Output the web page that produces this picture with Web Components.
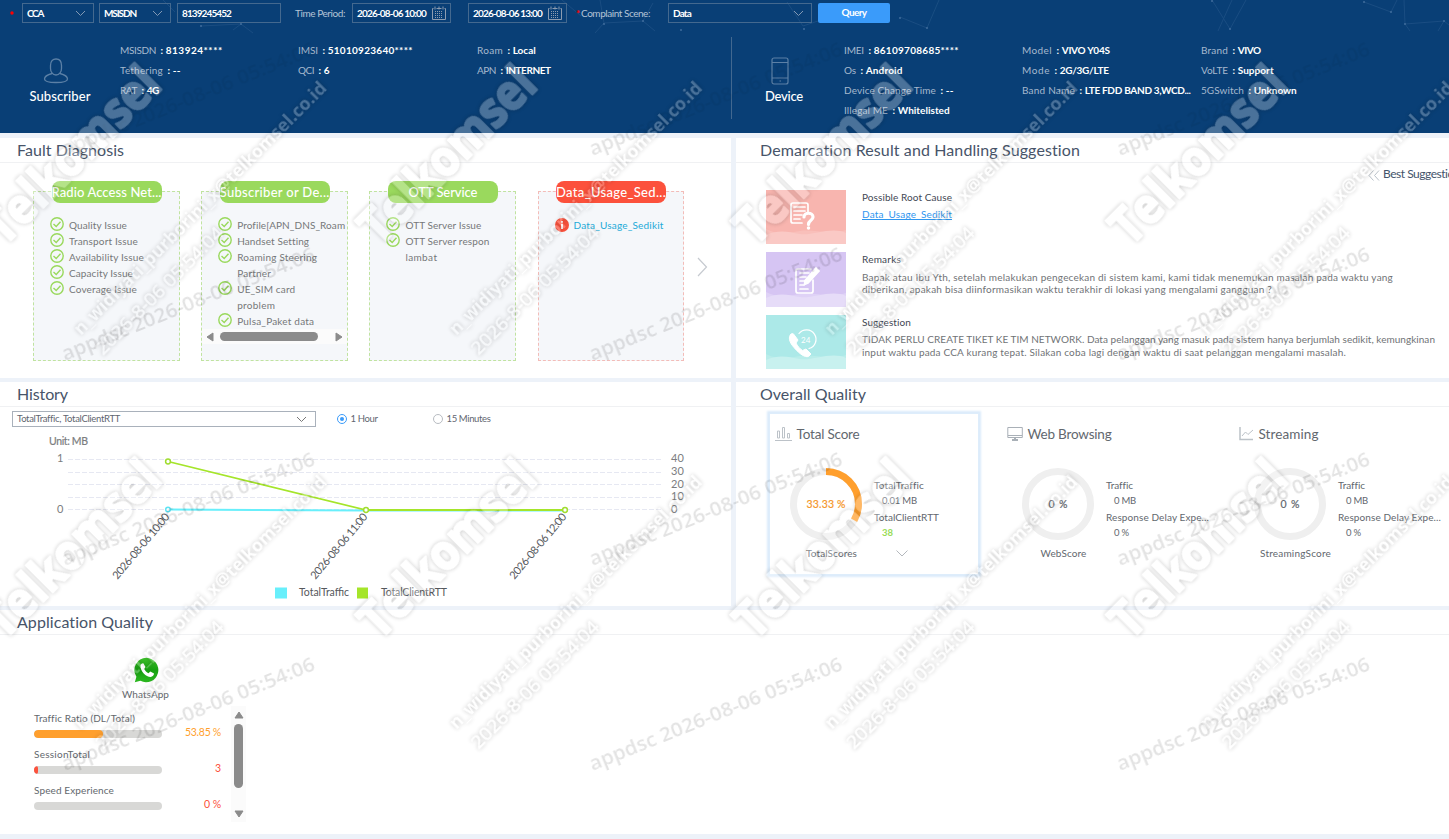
<!DOCTYPE html>
<html lang="en">
<head>
<meta charset="utf-8">
<title>Complaint Diagnosis</title>
<style>
html,body{margin:0;width:1449px;height:839px;overflow:hidden;background:#edf2f9;font-family:Lato,"Open Sans",sans-serif}
</style>
</head>
<body>
<complaint-app></complaint-app>
<script>
const define = (name, css, html, after) => customElements.define(name, class extends HTMLElement {
  constructor() { super(); this.attachShadow({mode: 'open'}); }
  connectedCallback() {
    if (this.ready) return;
    this.ready = true;
    const a = k => this.getAttribute(k) || '';
    this.shadowRoot.innerHTML = '<style>*{box-sizing:border-box}' + css + '</style>' + (typeof html === 'function' ? html(a, this) : html);
    if (after) after(this, a);
  }
});
const txt = (s, w, size = 10, extra = '') => `<fit-text w="${w}" s="${size}" ${extra}>${s}</fit-text>`;

/* ---------- query bar ---------- */
define('query-box', `:host{display:flex;align-items:center;height:20px;border:1px solid #44698f;color:#fff;padding:0 7px 0 4px;justify-content:space-between;flex:none;box-sizing:border-box}`,
  a => `<slot></slot>` + (a('kind') === 'select'
    ? `<svg width="11" height="7" viewBox="0 0 11 7" fill="none" stroke="#8299b4"><path d="M1 1l4.5 4.5L10 1"/></svg>`
    : a('kind') === 'date'
    ? `<svg width="14" height="14" viewBox="0 0 14 14" fill="none" stroke="#8c9cb0" style="margin-right:-3px"><path d="M.5 2.5v11h13v-11M.5 2.5h1M4.500 2.500h5M12.500 2.500h1M3 .5v3M11 .5v3M7 .5v3"/><path stroke-dasharray="1 1" d="M3 5.500h8M3 7.500h8M3 9.500h8M3 11.500h8"/></svg>` : ''));

define('query-bar', `:host{display:flex;align-items:center;height:26px;padding:0 0 0 10px}
 .star{color:#f00;font:700 10px/10px Lato;width:4px}
 .lab{color:#b4c4d6;display:flex}button{display:flex;align-items:center;justify-content:center;font:700 10px Lato;color:#fff;background:#3a9bfa;border:0;border-radius:2px;width:72px;height:20px;margin-left:6px;padding:0 0 1px}`,
 `<svg width="4" height="4" style="margin-right:8px"><circle cx="2" cy="2" r="1.700" fill="#f00"/></svg>
 <query-box kind="select" style="width:72px">${txt('CCA',16,10,'b')}</query-box>
 <query-box kind="select" style="width:72px;margin-left:5px">${txt('MSISDN',32,10,'b')}</query-box>
 <query-box style="width:104px;margin-left:6px">${txt('8139245452',49,10,'b')}</query-box>
 <span class="lab" style="margin-left:14px">${txt('Time Period:',50)}</span>
 <query-box kind="date" style="width:99px;margin-left:7px">${txt('2026-08-06 10:00',69,10,'b')}</query-box>
 <query-box kind="date" style="width:99px;margin-left:17px">${txt('2026-08-06 13:00',69,10,'b')}</query-box>
 <span class="star" style="margin-left:9px">*</span><span class="lab" style="margin-left:1px">${txt('Complaint Scene:',69)}</span>
 <query-box kind="select" style="width:144px;margin-left:18px">${txt('Data',18,10,'b')}</query-box>
 <button>${txt('Query',25,10,'b')}</button>`);

/* ---------- identity blocks ---------- */
define('info-item', `:host{display:flex;height:20px;align-items:center;color:#fff}.k{color:#a6b9ce;display:flex}i{font:700 10px/13px Lato;width:5px;margin-left:4px;text-align:left;padding-left:.5px;margin-right:.7px}`,
 a => `<span class="k">${txt(a('k'), a('kw'))}</span><i>:</i>${txt(a('v'), a('vw'), 10, 'b')}`);

define('info-block', `:host{display:flex;box-sizing:border-box;height:82px}
 .who{display:flex;flex-direction:column;align-items:center;justify-content:flex-end;color:#fff;height:68px;gap:4px}
 .cols{display:grid;grid-template-columns:178px 179px 150px;padding-top:3px}`,
 `<div class="who"><slot name="icon"></slot><slot name="name"></slot></div><div class="cols"><div><slot name="c1"></slot></div><div><slot name="c2"></slot></div><div><slot name="c3"></slot></div></div>`,
 (el, a) => { el.shadowRoot.querySelector('.who').style.width = a('who') + 'px'; el.shadowRoot.querySelector('.cols').style.marginLeft = a('gap') + 'px'; });

const kv = (slot, k, kw, v, vw) => `<info-item slot="${slot}" k="${k}" kw="${kw}" v="${v}" vw="${vw}"></info-item>`;
define('app-header', `:host{display:block;height:133px;background:#093f76;position:relative;overflow:hidden}
 .net{position:absolute;left:0;top:0}.bar{position:relative}.ids{position:relative;display:flex;margin-top:11px}
 .dev{border-left:1px solid #426890}`,
 `<svg class="net" width="1449" height="45" fill="none" stroke="#1a4d82" stroke-width="1"><path d="M201 26l40-2 12 9M241 24l-8 6M163 0l12 12M562 0l19 16M595 33l9-10 39-2 12 10M643 21l10-18M600 0l4 23M787 2l16 24 30-10M900 17l27 11 12-28M1212 0l18 29 16-29M1232 0l-14 31M1364 2l27 10 6-12M1404 0l1 24 39-3M1444 21l-6 10M1405 24l5 7M1444 21l5 4"/><g fill="#3f6c9c" stroke="none"><circle cx="201" cy="26" r="1"/><circle cx="241" cy="24" r="1"/><circle cx="604" cy="24" r="1"/><circle cx="643" cy="21" r="1"/><circle cx="681" cy="30" r="1"/><circle cx="804" cy="29" r="1"/><circle cx="900" cy="18" r="1"/><circle cx="927" cy="28" r="1"/><circle cx="1212" cy="1" r="1"/><circle cx="1230" cy="29" r="1"/><circle cx="1364" cy="2" r="1"/><circle cx="1391" cy="12" r="1"/><circle cx="1405" cy="24" r="1"/><circle cx="1444" cy="21" r="1"/></g></svg>
 <div class="bar"><query-bar></query-bar></div>
 <div class="ids">
 <info-block who="62" gap="29" style="width:731px;padding-left:29px">
  <svg slot="icon" width="26" height="26" viewBox="0 0 26 26" fill="none" stroke="#5c80a6" stroke-width="1.300" style="margin-right:8px;margin-bottom:-3px"><path d="M7.500 7.500C7.500 3 10 1 13 1s5.500 2 5.500 6.500v3c0 3-2 6.500-5.500 6.500s-5.500-3.500-5.500-6.500zM9 15.500c-3 .8-7.500 2.500-7.500 5.500 0 2.500 4 3.500 11.500 3.500s11.500-1 11.500-3.500c0-3-4.500-4.700-7.500-5.500"/></svg>
  <span slot="name">${txt('Subscriber', 61, 13, 'm')}</span>
  ${kv('c1','MSISDN',36,'813924****',57)}${kv('c1','Tethering',43,'--',8)}${kv('c1','RAT',17,'4G',12)}
  ${kv('c2','IMSI',20,'51010923640****',85)}${kv('c2','QCI',16,'6',6)}
  ${kv('c3','Roam',26,'Local',23)}${kv('c3','APN',19,'INTERNET',45)}
 </info-block>
 <info-block class="dev" who="40" gap="40" style="padding-left:32px">
  <svg slot="icon" width="18" height="28" viewBox="0 0 18 28" fill="none" stroke="#5c80a6" stroke-width="1.200" style="margin-right:9px;margin-left:0;margin-bottom:-4px"><rect x="1" y="1" width="16" height="26" rx="2"/><path d="M1 5.500h16M1 21h16M8.500 24h1.500"/></svg>
  <span slot="name">${txt('Device', 38, 13, 'm')}</span>
  ${kv('c1','IMEI',20,'86109708685****',85)}${kv('c1','Os',12,'Android',37)}${kv('c1','Device Change Time',92,'--',8)}${kv('c1','Illegal ME',44,'Whitelisted',52)}
  ${kv('c2','Model',30,'VIVO Y04S',48)}${kv('c2','Mode',28,'2G/3G/LTE',49)}${kv('c2','Band Name',53,'LTE FDD BAND 3,WCD...',106)}
  ${kv('c3','Brand',27,'VIVO',23)}${kv('c3','VoLTE',27,'Support',36)}${kv('c3','5GSwitch',43,'Unknown',43)}
 </info-block></div>`);

/* ---------- panel frame ---------- */
define('ui-panel', `:host{display:flex;flex-direction:column;background:#fff;min-width:0;overflow:hidden}
 header{height:25px;flex:none;border-bottom:1px solid #f0f1f3;display:flex;align-items:center;color:#475469;line-height:20px;padding-bottom:2px}main{flex:1;min-height:0}`,
 a => `<header style="padding-left:${a('pad')}px">${txt(a('title'), a('tw'), 16)}</header><main><slot></slot></main>`);

/* ---------- fault diagnosis ---------- */
const tick = `<svg width="14" height="14" viewBox="0 0 14 14" fill="none" stroke="#9ad95d" stroke-width="1.400"><circle cx="7" cy="7" r="6.200"/><path d="M3.500 7l2.700 2.500 4.300-4.700"/></svg>`;
const alertIcon = `<svg width="14" height="14" viewBox="0 0 14 14" style="margin-top:1px"><circle cx="7" cy="7" r="7" fill="#fc513c"/><path d="M7 3v1.800M7 5.800V11" stroke="#fff" stroke-width="1.800"/></svg>`;
define('fault-card', `:host{display:block;width:147px;height:170px;border:1px dashed #c0e3a0;background:#f5f7fa;flex:none;box-sizing:border-box}
 :host([bad]){border-color:#f3bcb8}
 .pill{width:110px;height:22px;border-radius:8px;background:#9ad95d;color:#fff;margin:-11px 0 0 17.500px;display:flex;align-items:center;justify-content:center;overflow:hidden}
 :host([bad]) .pill{background:#fc513c}
 ul{list-style:none;margin:14px 0 0;padding:0 0 0 16px}
 li{display:flex;gap:5px;color:#757779}svg{flex:none}li div{display:flex;flex-direction:column}
 :host([bad]) li{color:#23aad8}
 .sb{display:flex;align-items:center;justify-content:space-between;background:#fbfbfb;height:15px;padding:0 4px}
 .sb b{width:98px;height:9px;border-radius:5px;background:#8b8b8b;margin-right:11px}`,
 a => `<div class="pill">${txt(a('name'), a('nw'), 13, 'm')}</div><ul>` +
  a('items').split(';').map(it => `<li>${a('kind') ? alertIcon : tick}<div>${it.split('/').map(l => { const [s, w] = l.split('|'); return txt(s, w || 80, 10, 'h="16"'); }).join('')}</div></li>`).join('') + '</ul>' +
  (a('scroll') ? `<div class="sb"><svg width="8" height="10"><path d="M7 1v8L1 5z" fill="#8b8b8b" stroke="#8b8b8b"/></svg><b></b><svg width="8" height="10"><path d="M1 1v8l6-4z" fill="#8b8b8b" stroke="#8b8b8b"/></svg></div>` : ''));
define('fault-list', `:host{display:flex;padding:28px 0 0 33px;height:100%;box-sizing:border-box}fault-card{margin-right:21.200px}fault-card[bad]{width:146px}.next{margin-left:-8px;margin-top:66px}`,
 `<fault-card name="Radio Access Net..." nw="110" items="Quality Issue|58;Transport Issue|69;Availability Issue|75;Capacity Issue|64;Coverage Issue|68"></fault-card>
 <fault-card name="Subscriber or De..." nw="110" scroll="1" items="Profile[APN_DNS_Roam|108;Handset Setting|72;Roaming Steering|80/Partner|34;UE_SIM card|58/problem|38;Pulsa_Paket data|77"></fault-card>
 <fault-card name="OTT Service" nw="69" items="OTT Server Issue|76;OTT Server respon|84/lambat|32"></fault-card>
 <fault-card bad kind="bad" name="Data_Usage_Sed..." nw="110" items="Data_Usage_Sedikit|90"></fault-card>
 <svg class="next" width="11" height="20" fill="none" stroke="#c6cad0" stroke-width="1.200"><path d="M1 1l8.500 9L1 19"/></svg>`);

/* ---------- suggestions ---------- */
define('suggest-row', `:host{display:flex;gap:16px;box-sizing:border-box}
 .pic{width:80px;flex:none;display:block}.t{color:#3f4854;display:flex;flex-direction:column;margin-top:-1px}`,
 a => { const h = a('h'), c = a('c').split(','), art = {
  ask: `<path d="M27 13h13a2 2 0 012 2v7M25 15v16a2 2 0 002 2h9M25 15a2 2 0 012-2" /><path d="M28 17h11M28 21h11M28 25h8M28 29h6"/><path d="M38 27c0-5 9-5 9 0 0 3.500-4.500 3-4.500 7.500" stroke-width="3.200"/><circle cx="42.500" cy="38" r="1" stroke-width="1.500" fill="#fff"/>`,
  note: `<path d="M45 17h-13a2 2 0 00-2 2v20a2 2 0 002 2h13a2 2 0 002-2V28"/><path d="M34 21h9M34 25h6M34 29h5M34 33h4M34 37h8"/><path d="M50 16l3 3-11 12-3.500 1.500.5-4z" fill="#fff"/>`,
  call: `<path d="M25 19c-3 3-2 8 3 13.500 6 7 11 10 14.500 9l2.500-2.500-5-5-3.500 1.500c-3-2-5-4.500-6.500-7.500l2-3-4.500-6z" fill="#fff" stroke-width="1"/><path d="M33 18.500a9.500 9.500 0 1110 15" stroke-width="1.200"/><text x="35" y="28" font-size="8" font-family="Lato" fill="#fff" stroke="none">24</text>` }[a('art')];
  return `<svg class="pic" height="${h}" viewBox="0 0 80 ${h}"><rect width="80" height="${h}" fill="${c[0]}"/><path d="M0 ${h-15}c12 6 22 4 34 2s30 4 46-1V${h}H0z" fill="${c[1]}"/><path d="M0 ${h-9}c14-6 22-3 34-1s32-8 46-1V${h}H0z" fill="${c[2]}"/><g fill="none" stroke="#fff" stroke-width="1.700" stroke-linecap="round">${art}</g></svg><div class="t"><slot></slot></div>`; });
define('suggest-list', `:host{display:flex;flex-direction:column;padding-left:30px;width:713px;box-sizing:border-box}
 .best{display:flex;gap:3px;margin:3px 0 0 602px;height:16px;align-items:center;color:#44546b;white-space:nowrap}.best svg,.best fit-text{flex:none}
 .b{color:#707376;display:flex;flex-direction:column}.a{color:#2f96ef;display:flex}`,
 `<div class="best"><svg width="12" height="11" fill="none" stroke="#b9c0c8" style="margin-top:2px"><path d="M5.500 .5L1 5.500l4.500 5M11 .5L6.500 5.500l4.500 5"/></svg>${txt('Best Suggestion',77,12)}</div>
 <suggest-row art="ask" h="54" c="#f8b5af,#f9bfba,#fac9c5" style="margin-top:8px">${txt('Possible Root Cause',90,10,'h="16"')}<span class="a">${txt('Data_Usage_Sedikit',90,10,'h="18" u')}</span></suggest-row>
 <suggest-row art="note" h="55" c="#d6c5f3,#dfd2f6,#e6dcf8" style="margin-top:8px">${txt('Remarks',39,10,'h="16"')}<span class="b" style="margin-top:4px">${txt('Bapak atau Ibu Yth, setelah melakukan pengecekan di sistem kami, kami tidak menemukan masalah pada waktu yang',531,10,'h="12"')}${txt('diberikan, apakah bisa diinformasikan waktu terakhir di lokasi yang mengalami gangguan ?',410,10,'h="12"')}</span></suggest-row>
 <suggest-row art="call" h="54" c="#ace9e8,#b9edea,#c8f1ef" style="margin-top:8px">${txt('Suggestion',49,10,'h="16"')}<span class="b" style="margin-top:3px">${txt('TIDAK PERLU CREATE TIKET KE TIM NETWORK. Data pelanggan yang masuk pada sistem hanya berjumlah sedikit, kemungkinan',573,10,'h="13"')}${txt('input waktu pada CCA kurang tepat. Silakan coba lagi dengan waktu di saat pelanggan mengalami masalah.',484,10,'h="13"')}</span></suggest-row>`);

/* ---------- history ---------- */
define('history-chart', `:host{display:block}.ctl{display:flex;align-items:center;padding:4px 0 0 12px;height:20px;color:#5f6670}
 .sel{width:304px;height:16px;border:1px solid #a9b1bb;display:flex;align-items:center;justify-content:space-between;padding:0 8px 0 4px}
 .r{width:10px;height:10px;border:1px solid #b8bcc2;border-radius:50%;margin-right:4px;display:flex;align-items:center;justify-content:center}
 .on{border-color:#3a9bfa}.on:after{content:"";width:4px;height:4px;border-radius:50%;background:#3a9bfa}
 svg{display:block}text{font-family:Lato,sans-serif}`,
 `<div class="ctl"><div class="sel">${txt('TotalTraffic, TotalClientRTT',103,9.5)}<svg width="11" height="7" fill="none" stroke="#777"><path d="M1 1l4.500 4.500L10 1"/></svg></div>
 <span class="r on" style="margin-left:20.500px"></span>${txt('1 Hour',27,9.500)}<span class="r" style="margin-left:55px"></span>${txt('15 Minutes',44,9.500)}</div>
 <svg width="731" height="179" viewBox="0 427 731 179"><g stroke="#e6e8f2" stroke-dasharray="5 2"><path d="M68 459.500H663M68 472.500H663M68 484.500H663M68 497.500H663M68 509.500H663"/></g>
 <g font-size="11" fill="#7b7d80"><text x="49" y="445" font-size="10.500" textLength="39" stroke="#7b7d80" stroke-width=".2">Unit: MB</text><text x="57" y="462">1</text><text x="57" y="513">0</text>
 <text x="671" y="462">40</text><text x="671" y="475">30</text><text x="671" y="488">20</text><text x="671" y="500">10</text><text x="671" y="513">0</text></g>
 <g fill="none" stroke-width="1.500"><path d="M168 509.500L366 510.500H565" stroke="#68effb" stroke-width="2"/><circle cx="168" cy="509.500" r="2.300" fill="#fff" stroke="#5fe3f3"/>
 <path d="M168 461.500L366 510H565" stroke="#a5e52a" stroke-width="1.800"/><g fill="#fff" stroke="#a0dd30"><circle cx="168" cy="461.500" r="2.400"/><circle cx="366" cy="510" r="2.400"/><circle cx="565" cy="510" r="2.400"/></g></g>
 <g font-size="11" fill="#55585c"><text transform="translate(117.500 580) rotate(-50)" textLength="82">2026-08-06 10:00</text><text transform="translate(315.500 580) rotate(-50)" textLength="82">2026-08-06 11:00</text><text transform="translate(514.500 580) rotate(-50)" textLength="82">2026-08-06 12:00</text>
 <rect x="275" y="587.500" width="12" height="11" fill="#68effb"/><text x="299" y="596" font-size="10.500" textLength="50" >TotalTraffic</text><rect x="357" y="587.500" width="11" height="11" fill="#a5e52a"/><text x="381" y="596" font-size="10.500" textLength="66">TotalClientRTT</text></g></svg>`);

/* ---------- quality ---------- */
define('score-card', `:host{display:block;width:210px;height:162px;box-sizing:border-box;flex:none}:host([on]){background:#fff;box-shadow:0 0 2px 2px #dbebfb,inset 0 0 0 1px #deedfb}
 .h{display:flex;align-items:center;gap:4.500px;padding:10px 0 0 6px;color:#62676e;height:31px;line-height:18px}.h svg{margin-top:0}.m{display:flex;padding:24px 0 0 21px}
 .g{display:flex;flex-direction:column;align-items:center;width:72px;color:#62676e;gap:5px}
 .d{display:flex;flex-direction:column;margin-left:12px;padding-top:9px;color:#62676e}.v{display:flex;margin-left:8px}.bot{display:flex;justify-content:center;width:76px;position:relative;margin-right:-11px}
 .bot svg{position:absolute;left:102px;top:5px}`,
 a => { const c = 2 * Math.PI * 32.5, ico = {
  bars: `<svg width="17" height="16" fill="none" stroke="#bcc2c8"><path d="M0 14.500h17M2.500 5h2v7h-2zM7.500 1.500h2v10.500h-2zM12.500 7.500h2V12h-2z"/></svg>`,
  pc: `<svg width="16" height="16" fill="none" stroke="#a9b0b7"><path d="M.8 1.500h14.500v10H.8zM1 9.500h14" /><path d="M5 14h6M8 12v2" stroke-width="2"/></svg>`,
  line: `<svg width="15" height="16" fill="none" stroke="#bcc2c8"><path d="M1 1v12.500h13" stroke-width="1.500"/><path d="M3 10l3.500-4 2.500 2.500L14 4"/></svg>` }[a('icon')];
  return `<div class="h">${ico}${txt(a('title'), a('tw'), 13.500)}</div><div class="m"><div class="g">
  <svg width="72" height="72" style="display:block"><circle cx="36" cy="36" r="32.500" fill="none" stroke="#efefef" stroke-width="7"/>${a('pct') ? `<circle cx="36" cy="36" r="32.500" fill="none" stroke="#ff9f2d" stroke-width="7" stroke-dasharray="${c * a('pct') / 100} ${c}" transform="rotate(-90 36 36)"/>` : ''}<text x="36" y="40" text-anchor="middle" font-size="10.500" font-family="Lato" textLength="${a('vw')}" fill="${a('pct') ? '#f5982c' : '#62676e'}" stroke="${a('pct') ? '#f5982c' : '#62676e'}" stroke-width=".2">${a('val')}</text></svg>
  <div class="bot">${txt(a('name'), a('nw'), 10, 'h="16"')}${a('pct') ? '<svg width="12" height="7" fill="none" stroke="#b4b8bd"><path d="M.5 .5L6 6 11.500 .5"/></svg>' : ''}</div></div>
  <div class="d">${txt(a('m1'), a('w1'), 10, 'h="17"')}<span class="v">${txt(a('v1'), a('vw1'), 9.500, 'h="14"')}</span>${txt(a('m2'), a('w2'), 10, 'h="18"')}<span class="v" style="${a('pct') ? 'color:#97dc56' : ''}">${txt(a('v2'), a('vw2'), 9.500, `h="14" ${a('pct') ? 'b' : ''}`)}</span></div></div>`; });
define('score-list', `:host{display:flex;gap:22px;padding:6px 0 0 33px}`,
 `<score-card on icon="bars" title="Total Score" tw="63" pct="33.33" val="33.33 %" vw="39" name="TotalScores" nw="51" m1="TotalTraffic" w1="50" v1="0.01 MB" vw1="35" m2="TotalClientRTT" w2="65" v2="38" vw2="11"></score-card>
 <score-card icon="pc" title="Web Browsing" tw="84" val="0 %" vw="19" name="WebScore" nw="46" m1="Traffic" w1="27" v1="0 MB" vw1="22" m2="Response Delay Expe..." w2="103" v2="0 %" vw2="15"></score-card>
 <score-card icon="line" title="Streaming" tw="60" val="0 %" vw="19" name="StreamingScore" nw="71" m1="Traffic" w1="27" v1="0 MB" vw1="22" m2="Response Delay Expe..." w2="103" v2="0 %" vw2="15"></score-card>`);

/* ---------- applications ---------- */
define('meter-row', `:host{display:flex;height:36px;color:#63686d;align-items:flex-start}.l{width:128px;display:flex;flex-direction:column}.bar{height:8px;border-radius:4px;background:#d8d8d6;overflow:hidden;margin-top:4px}.bar i{display:block;height:8px;border-radius:4px}.v{width:59px;display:flex;justify-content:flex-end;padding-top:15px}`,
 a => `<div class="l">${txt(a('name'), a('nw'), 10, 'h="16"')}<div class="bar"><i style="width:${a('p')}px;background:${a('c')};${a('p') < 8 ? 'border-radius:2px' : ''}"></i></div></div><div class="v" style="color:${a('c')}">${txt(a('v'), a('vw'), 10.500)}</div>`);
define('app-quality', `:host{display:block}.app{display:flex;flex-direction:column;align-items:center;width:47px;margin:22px 0 0 122px;color:#63686d}
 .body{display:flex;padding:4px 0 0 34px;height:120px}.rows{padding-top:4px;width:197px}
 .sb{width:15px;height:116px;background:#fbfbfb;display:flex;flex-direction:column;align-items:center;padding:5px 0 3px}.sb b{width:9px;height:64px;border-radius:5px;background:#8b8b8b;margin:5px 0 22px;flex:none}`,
 `<div class="app"><svg width="26" height="26" viewBox="0 0 26 26"><defs><linearGradient id="g" x1="0" y1="0" x2="0" y2="1"><stop offset="0" stop-color="#3fc02c"/><stop offset=".5" stop-color="#16a010"/><stop offset="1" stop-color="#2cb820"/></linearGradient></defs><path d="M13.500 .8a12.200 12.200 0 11-6 23L1.800 25.200l1.600-5.500A12.200 12.200 0 0113.500.8z" fill="url(#g)"/><path d="M7.500 8.500c.5-1.500 2-2.500 3-2l2 3.500-1.300 2c1 2 2.300 3.300 4.300 4.200l1.800-1.600 3.700 2c0 1.500-1.500 3.200-3.300 3.400-4 .3-10.700-5.500-10.200-11.500z" fill="#fff"/></svg><div style="margin-top:3px;display:flex">${txt('WhatsApp',47,10,'h="16"')}</div></div>
 <div class="body"><div class="rows"><meter-row name="Traffic Ratio (DL/Total)" nw="101" p="69" c="#ff9f2d" v="53.85 %" vw="36"></meter-row><meter-row name="SessionTotal" nw="56" p="4" c="#fc513c" v="3" vw="6"></meter-row><meter-row name="Speed Experience" nw="80" p="0" c="#fc513c" v="0 %" vw="17"></meter-row></div>
 <div class="sb"><svg width="10" height="8" style="flex:none"><path d="M1 7h8L5 1z" fill="#8b8b8b" stroke="#8b8b8b"/></svg><b></b><svg width="10" height="8" style="flex:none"><path d="M1 1h8L5 7z" fill="#8b8b8b" stroke="#8b8b8b"/></svg></div></div>`);

/* ---------- security watermark over the whole page ---------- */
define('water-mark', `:host{position:absolute;inset:0;pointer-events:none;display:block;overflow:hidden}svg{display:block}
 .w{opacity:.27;fill:#fff}.w text{filter:drop-shadow(0 0 2.300px rgba(0,0,0,.8))}`,
 () => { let g = '', d = '';
  for (let r = 0; r < 2; r++) for (let c = 0; c < 4; c++) {
   const x = c * 375.5, y = r * 394;
   g += `<text transform="translate(${x + 4} ${y + 247}) rotate(-45)" font-family="Open Sans" font-weight="700" font-size="51" stroke="#fff" stroke-width="2.500" stroke-linejoin="round" textLength="226" lengthAdjust="spacingAndGlyphs">Telkomsel</text>
    <text transform="translate(${x + 81} ${y + 336}) rotate(-45)" font-family="Open Sans" font-weight="700" font-size="18" textLength="349" lengthAdjust="spacingAndGlyphs">n_widiyati_purborini_x@telkomsel.co.id</text>
    <text transform="translate(${x + 103} ${y + 356}) rotate(-45)" font-family="Open Sans" font-weight="400" font-size="19" stroke="#fff" stroke-width=".6" textLength="172" lengthAdjust="spacingAndGlyphs">2026-8-06 05:54:04</text>`; }
  for (let r = 0; r < 4; r++) for (let c = 0; c < 3; c++)
   d += `<text transform="translate(${c * 527.5 + 65} ${r * 205 + 156}) rotate(-22)" textLength="271" lengthAdjust="spacingAndGlyphs">appdsc 2026-08-06 05:54:06</text>`;
  return `<svg width="1449" height="839"><defs><mask id="m" maskUnits="userSpaceOnUse" x="0" y="0" width="1449" height="839"><rect width="1449" height="839" fill="#fff"/><rect width="1449" height="133" fill="#666"/></mask></defs><g mask="url(#m)"><g font-family="Open Sans" font-size="20" font-weight="600" fill="#000" opacity=".11">${d}</g></g><g class="w">${g}</g></svg>`; });

define('complaint-app', `:host{display:block;position:relative;width:1449px;height:839px;overflow:hidden}
 .grid{display:grid;grid-template-columns:731px 713px;grid-template-rows:240px 224px 224px;gap:4px 5px;margin-top:5px}.wide{grid-column:1/3}`,
 `<app-header></app-header><div class="grid">
 <ui-panel title="Fault Diagnosis" tw="107" pad="17"><fault-list></fault-list></ui-panel>
 <ui-panel title="Demarcation Result and Handling Suggestion" tw="320" pad="24"><suggest-list></suggest-list></ui-panel>
 <ui-panel title="History" tw="51" pad="17"><history-chart></history-chart></ui-panel>
 <ui-panel title="Overall Quality" tw="106" pad="24"><score-list></score-list></ui-panel>
 <ui-panel class="wide" title="Application Quality" tw="136" pad="17"><app-quality></app-quality></ui-panel></div><water-mark></water-mark>`);

/* A label that tracks its letters so that it fills the width it is given. */
define('fit-text', `:host{display:inline-block;white-space:nowrap;flex:none}span{display:inline-block;white-space:nowrap}`,
 a => `<span><slot></slot></span>`,
 (el, a) => {
  const sp = el.shadowRoot.querySelector('span'), s = +a('s'), w = parseFloat(a('w'));
  sp.style.cssText = `font-size:${s}px;font-weight:${el.hasAttribute('b') ? 700 : el.hasAttribute('m') ? 500 : 400};letter-spacing:.01px;line-height:${a('h') || Math.round(s * 1.3)}px;${el.hasAttribute('u') ? 'text-decoration:underline;text-decoration-skip-ink:none;' : ''}`;
  el.style.height = (a('h') || Math.round(s * 1.3)) + 'px';
  el.style.lineHeight = 0;
  const n = el.textContent.length, nat = sp.getBoundingClientRect().width;
  if (w && nat) { sp.style.letterSpacing = ((w - nat) / n + .01).toFixed(3) + 'px'; el.style.width = w + 'px'; }
 });
</script>
</body>
</html>
